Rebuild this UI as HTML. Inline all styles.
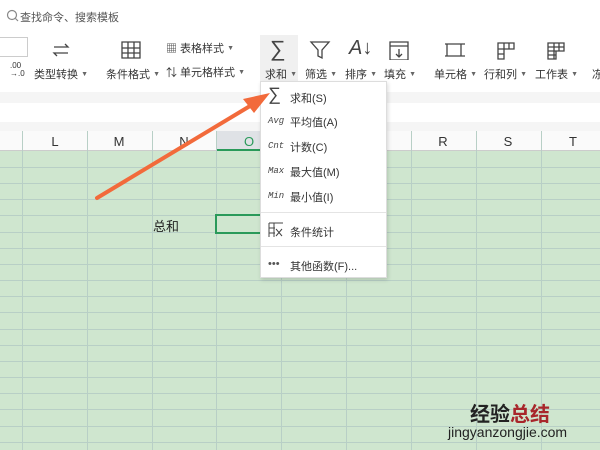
<!DOCTYPE html><html><head><meta charset="utf-8"><style>
*{margin:0;padding:0;box-sizing:border-box}
body{width:600px;height:450px;overflow:hidden;background:#fff;font-family:"Liberation Sans","Noto Sans CJK SC",sans-serif;position:relative;font-size:11px;color:#333}
.a{position:absolute;white-space:nowrap}
.grid{position:absolute;left:0;top:151px;width:600px;height:299px;background:#cfe6cf}
.ico{position:absolute;stroke:#444;fill:none;stroke-width:1.3}
.mi{position:absolute;left:290px;font-size:11px;color:#333}
.ml{position:absolute;left:268px;font-size:9px;font-style:italic;color:#444;font-family:"Liberation Mono",monospace}
i{font-style:normal;font-size:7px;color:#666;vertical-align:2px}
</style></head><body>
<svg class="a" style="left:6px;top:9px" width="14" height="14"><circle cx="6" cy="6" r="4.5" fill="none" stroke="#888" stroke-width="1.2"/><path d="M9.5 9.5L12 12" stroke="#888" stroke-width="1.2"/></svg>
<div class="a" style="left:20px;top:9px;color:#555;font-size:11px">查找命令、搜索模板</div>
<!-- ribbon -->
<div class="a" style="left:0;top:37px;width:28px;height:20px;border:1px solid #ccc;border-left:none"></div>
<div class="a" style="left:10px;top:62px;font-size:8px;line-height:8px">.00<br>→.0</div>
<svg class="ico" style="left:50px;top:40px" width="22" height="20"><path d="M4 7h14l-3-3M18 13H4l3 3"/></svg>
<div class="a" style="left:34px;top:66px">类型转换 <i>▼</i></div>
<svg class="ico" style="left:120px;top:40px" width="22" height="20"><path d="M2 2h18v16H2zM2 8h18M2 13h18M8 2v16M14 2v16"/></svg>
<div class="a" style="left:106px;top:66px">条件格式 <i>▼</i></div>
<div class="a" style="left:166px;top:40px">▦ 表格样式 <i>▼</i></div>
<div class="a" style="left:166px;top:64px">⇅ 单元格样式 <i>▼</i></div>
<div class="a" style="left:260px;top:35px;width:38px;height:48px;background:#f0f0f0"></div>
<div class="a" style="left:270px;top:36px;font-size:22px;color:#444">∑</div>
<div class="a" style="left:265px;top:66px">求和 <i>▼</i></div>
<svg class="ico" style="left:309px;top:40px" width="22" height="20"><path d="M2 2h18l-7 8v8l-4-2v-6z"/></svg>
<div class="a" style="left:305px;top:66px">筛选 <i>▼</i></div>
<div class="a" style="left:349px;top:37px;font-size:20px;color:#444;font-style:italic">A↓</div>
<div class="a" style="left:345px;top:66px">排序 <i>▼</i></div>
<svg class="ico" style="left:388px;top:40px" width="22" height="20"><path d="M2 2h18v18H2zM2 6h18M11 9v8M8 14l3 3 3-3"/></svg>
<div class="a" style="left:384px;top:66px">填充 <i>▼</i></div>
<svg class="ico" style="left:443px;top:40px" width="22" height="20"><path d="M4 4h14v12H4zM2 4h20M2 16h20"/></svg>
<div class="a" style="left:434px;top:66px">单元格 <i>▼</i></div>
<svg class="ico" style="left:495px;top:40px" width="22" height="20"><path d="M3 3h16v6H9v10H3zM3 9h6M3 14h6M9 3v6M14 3v6"/></svg>
<div class="a" style="left:484px;top:66px">行和列 <i>▼</i></div>
<svg class="ico" style="left:545px;top:40px" width="22" height="20"><path d="M3 3h16v8H11v8H3zM3 7h16M3 11h8M3 15h8M9 3v16M14 3v8"/></svg>
<div class="a" style="left:535px;top:66px">工作表 <i>▼</i></div>
<div class="a" style="left:592px;top:66px">冻</div>
<div class="a" style="left:0;top:92px;width:600px;height:11px;background:#f5f5f5"></div>
<div class="a" style="left:0;top:122px;width:600px;height:9px;background:#f5f5f5"></div>
<!-- col header -->
<div class="a" style="left:0;top:131px;width:600px;height:20px;background:#fafafa;border-bottom:1px solid #ccc"></div>
<div class="a" style="left:216px;top:131px;width:65px;height:20px;background:#dfe2e6;border-bottom:2px solid #2a9a5a"></div>
<div class="grid"></div>
<svg class="a" style="left:0;top:131px" width="600" height="319">
<g stroke="#b8cfc6" stroke-width="1">
<path d="M22.5 0V319M87.5 0V319M152.5 0V319M216.5 0V319M281.5 0V319M346.5 0V319M411.5 0V319M476.5 0V319M541.5 0V319"/>
<path d="M0 36.5H600M0 52.5H600M0 68.5H600M0 84.5H600M0 101.5H600M0 117.5H600M0 133.5H600M0 149.5H600M0 165.5H600M0 181.5H600M0 198.5H600M0 214.5H600M0 230.5H600M0 246.5H600M0 262.5H600M0 278.5H600M0 295.5H600M0 311.5H600"/>
</g>
<g font-size="13" fill="#333" text-anchor="middle" font-family="Liberation Sans">
<text x="55" y="15">L</text><text x="119" y="15">M</text><text x="184" y="15">N</text><text x="249" y="15" fill="#2a9a5a">O</text><text x="443" y="15">R</text><text x="508" y="15">S</text><text x="573" y="15">T</text></g>
</svg>
<div class="a" style="left:153px;top:216px;font-size:13px;color:#222">总和</div>
<div class="a" style="left:215px;top:214px;width:70px;height:20px;border:2px solid #2a9a5a"></div>
<!-- dropdown -->
<div class="a" style="left:260px;top:81px;width:127px;height:197px;background:#fff;border:1px solid #ddd;box-shadow:1px 2px 4px rgba(0,0,0,.15)"></div>
<div class="a" style="left:268px;top:84px;font-size:18px;color:#444">∑</div>
<div class="mi" style="top:90px">求和(S)</div>
<div class="ml" style="top:116px">Avg</div><div class="mi" style="top:114px">平均值(A)</div>
<div class="ml" style="top:141px">Cnt</div><div class="mi" style="top:139px">计数(C)</div>
<div class="ml" style="top:166px">Max</div><div class="mi" style="top:164px">最大值(M)</div>
<div class="ml" style="top:191px">Min</div><div class="mi" style="top:189px">最小值(I)</div>
<div class="a" style="left:261px;top:212px;width:125px;height:1px;background:#e4e4e4"></div>
<svg class="ico" style="left:268px;top:222px;stroke-width:1" width="16" height="16"><path d="M1 1h14M1 1v14M1 6h6M1 11h6M6 1v14M8 7l6 7M14 7l-6 7"/></svg>
<div class="mi" style="top:224px">条件统计</div>
<div class="a" style="left:261px;top:246px;width:125px;height:1px;background:#e4e4e4"></div>
<div class="a" style="left:268px;top:258px;color:#555">•••</div>
<div class="mi" style="top:258px">其他函数(F)...</div>
<!-- arrow -->
<svg class="a" style="left:0;top:0" width="600" height="450"><line x1="97" y1="198" x2="255" y2="103" stroke="#f26a3b" stroke-width="4" stroke-linecap="round"/><path d="M270 93L243 99L254 113Z" fill="#f26a3b"/></svg>
<!-- watermark -->
<div class="a" style="left:470px;top:398px;font-size:20px;font-weight:bold;color:#222">经验<span style="color:#a8262b">总结</span></div>
<div class="a" style="left:448px;top:424px;font-size:14px;color:#222">jingyanzongjie.com</div>
</body></html>
